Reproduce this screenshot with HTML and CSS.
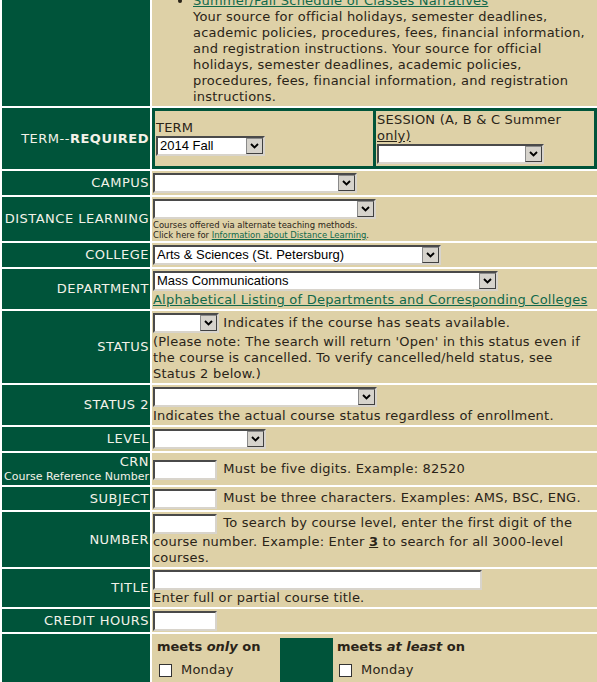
FILE: index.html
```html
<!DOCTYPE html>
<html lang="en">
<head>
<meta charset="utf-8">
<title>Class Search</title>
<link rel="stylesheet" href="styles.css">
</head>
<body>
<table class="search">
  <tr>
    <td class="lbl"></td>
    <td class="fld">
      <ul class="narr">
        <li><a href="#">Summer/Fall Schedule of Classes Narratives</a><br>
        Your source for official holidays, semester deadlines, academic policies, procedures, fees, financial information, and registration instructions. Your source for official holidays, semester deadlines, academic policies, procedures, fees, financial information, and registration instructions.</li>
      </ul>
    </td>
  </tr>
  <tr>
    <td class="lbl">TERM--<b>REQUIRED</b></td>
    <td class="fld nopad">
      <table class="term">
        <tr>
          <td>TERM<br>
            <span class="sel blk w-term"><select aria-label="Term"><option>2014 Fall</option></select><span class="sel-btn"><svg viewBox="0 0 9 6" width="9" height="6"><path d="M1 1l3.5 3.5L8 1" fill="none" stroke="#000" stroke-width="1.9"/></svg></span></span>
          </td>
          <td>SESSION (A, B &amp; C Summer <u>only)</u><br>
            <span class="sel blk w-session"><select aria-label="Session"><option></option></select><span class="sel-btn"><svg viewBox="0 0 9 6" width="9" height="6"><path d="M1 1l3.5 3.5L8 1" fill="none" stroke="#000" stroke-width="1.9"/></svg></span></span>
          </td>
        </tr>
      </table>
    </td>
  </tr>
  <tr>
    <td class="lbl">CAMPUS</td>
    <td class="fld"><span class="sel w-campus"><select aria-label="Campus"><option></option></select><span class="sel-btn"><svg viewBox="0 0 9 6" width="9" height="6"><path d="M1 1l3.5 3.5L8 1" fill="none" stroke="#000" stroke-width="1.9"/></svg></span></span></td>
  </tr>
  <tr>
    <td class="lbl">DISTANCE LEARNING</td>
    <td class="fld"><span class="sel w-dist"><select aria-label="Distance learning"><option></option></select><span class="sel-btn"><svg viewBox="0 0 9 6" width="9" height="6"><path d="M1 1l3.5 3.5L8 1" fill="none" stroke="#000" stroke-width="1.9"/></svg></span></span>
      <div class="tiny">Courses offered via alternate teaching methods.<br>Click here for <a href="#">Information about Distance Learning</a>.</div>
    </td>
  </tr>
  <tr>
    <td class="lbl">COLLEGE</td>
    <td class="fld"><span class="sel w-college"><select aria-label="College"><option>Arts &amp; Sciences (St. Petersburg)</option></select><span class="sel-btn"><svg viewBox="0 0 9 6" width="9" height="6"><path d="M1 1l3.5 3.5L8 1" fill="none" stroke="#000" stroke-width="1.9"/></svg></span></span></td>
  </tr>
  <tr>
    <td class="lbl">DEPARTMENT</td>
    <td class="fld"><span class="sel w-dept"><select aria-label="Department"><option>Mass Communications</option></select><span class="sel-btn"><svg viewBox="0 0 9 6" width="9" height="6"><path d="M1 1l3.5 3.5L8 1" fill="none" stroke="#000" stroke-width="1.9"/></svg></span></span><br>
      <a href="#">Alphabetical Listing of Departments and Corresponding Colleges</a>
    </td>
  </tr>
  <tr>
    <td class="lbl">STATUS</td>
    <td class="fld"><span class="sel w-status"><select aria-label="Status"><option></option></select><span class="sel-btn"><svg viewBox="0 0 9 6" width="9" height="6"><path d="M1 1l3.5 3.5L8 1" fill="none" stroke="#000" stroke-width="1.9"/></svg></span></span> Indicates if the course has seats available.
      <div>(Please note: The search will return 'Open' in this status even if the course is cancelled. To verify cancelled/held status, see Status 2 below.)</div>
    </td>
  </tr>
  <tr>
    <td class="lbl">STATUS 2</td>
    <td class="fld"><span class="sel w-status2"><select aria-label="Status 2"><option></option></select><span class="sel-btn"><svg viewBox="0 0 9 6" width="9" height="6"><path d="M1 1l3.5 3.5L8 1" fill="none" stroke="#000" stroke-width="1.9"/></svg></span></span><br>
      Indicates the actual course status regardless of enrollment.
    </td>
  </tr>
  <tr>
    <td class="lbl">LEVEL</td>
    <td class="fld"><span class="sel w-level"><select aria-label="Level"><option></option></select><span class="sel-btn"><svg viewBox="0 0 9 6" width="9" height="6"><path d="M1 1l3.5 3.5L8 1" fill="none" stroke="#000" stroke-width="1.9"/></svg></span></span></td>
  </tr>
  <tr>
    <td class="lbl">CRN<span class="lbl-sub">Course Reference Number</span></td>
    <td class="fld"><input class="txt w-short" type="text" aria-label="CRN"> Must be five digits. Example: 82520</td>
  </tr>
  <tr>
    <td class="lbl">SUBJECT</td>
    <td class="fld"><input class="txt w-short" type="text" aria-label="Subject"> Must be three characters. Examples: AMS, BSC, ENG.</td>
  </tr>
  <tr>
    <td class="lbl">NUMBER</td>
    <td class="fld"><input class="txt w-short" type="text" aria-label="Number"> To search by course level, enter the first digit of the course number. Example: Enter <b><u>3</u></b> to search for all 3000-level courses.</td>
  </tr>
  <tr>
    <td class="lbl">TITLE</td>
    <td class="fld"><input class="txt w-title" type="text" aria-label="Title"><br>Enter full or partial course title.</td>
  </tr>
  <tr>
    <td class="lbl">CREDIT HOURS</td>
    <td class="fld"><input class="txt w-short" type="text" aria-label="Credit hours"></td>
  </tr>
  <tr>
    <td class="lbl"></td>
    <td class="fld">
      <table class="days">
        <tr>
          <td class="dcol">
            <div class="dhead">meets <i>only</i> on</div>
            <label class="day"><input type="checkbox"> Monday</label>
            <label class="day"><input type="checkbox"> Tuesday</label>
            <label class="day"><input type="checkbox"> Wednesday</label>
            <label class="day"><input type="checkbox"> Thursday</label>
            <label class="day"><input type="checkbox"> Friday</label>
          </td>
          <td class="dgap"></td>
          <td class="dcol">
            <div class="dhead">meets <i>at least</i> on</div>
            <label class="day"><input type="checkbox"> Monday</label>
            <label class="day"><input type="checkbox"> Tuesday</label>
            <label class="day"><input type="checkbox"> Wednesday</label>
            <label class="day"><input type="checkbox"> Thursday</label>
            <label class="day"><input type="checkbox"> Friday</label>
          </td>
        </tr>
      </table>
    </td>
  </tr>
</table>
</body>
</html>
```

FILE: styles.css
```css
html {
  overflow: hidden;
  background: #fff;
}

body {
  margin: -10px 0 0 0;
  font: 13px/16px "DejaVu Sans", Verdana, sans-serif;
  letter-spacing: 0.22px;
  color: #2a2418;
}

a {
  color: #11694b;
}

.search {
  border-collapse: separate;
  border-spacing: 2px;
  width: calc(100% + 2px);
}

.lbl {
  width: 146px;
  padding: 1px;
  background: #00543a;
  color: #f3f2e8;
  text-align: right;
  vertical-align: middle;
  white-space: nowrap;
  letter-spacing: 0.5px;
}

.lbl-sub {
  display: block;
  font-size: 11px;
  line-height: 14px;
  letter-spacing: 0;
}

.fld {
  padding: 1px;
  background: #ded1a7;
  vertical-align: middle;
}

.fld.nopad {
  padding: 0;
}

.narr {
  margin: 0;
  padding-left: 40px;
}

/* term / session sub table */
.term {
  width: 100%;
  border-collapse: separate;
  border-spacing: 3px;
  background: #00543a;
}

.term td {
  width: 50%;
  padding: 1px 6px 2px 1px;
  background: #ded1a7;
  vertical-align: middle;
}

/* classic drop-downs */
.sel {
  display: inline-flex;
  box-sizing: border-box;
  height: 20px;
  margin: 1px 0;
  border: 2px solid;
  border-color: #4a4a4a #d8d4cc #d8d4cc #4a4a4a;
  background: #fff;
  vertical-align: middle;
  letter-spacing: 0;
}

.sel.blk {
  display: flex;
  margin: 0;
}

.sel select {
  -webkit-appearance: none;
  appearance: none;
  flex: 1;
  min-width: 0;
  height: 16px;
  margin: 0;
  border: 0;
  padding: 0 0 0 2px;
  background: #fff;
  color: #000;
  font: 13px/16px "Liberation Sans", Arial, sans-serif;
  outline: none;
}

.sel-btn {
  flex: none;
  display: flex;
  align-items: center;
  justify-content: center;
  box-sizing: border-box;
  width: 17px;
  height: 16px;
  background: #d6d3cc;
  border: 1px solid;
  border-color: #8a8a8a #404040 #404040 #8a8a8a;
}

.w-term { width: 109px; }
.w-session { width: 167px; }
.w-campus { width: 204px; }
.w-dist { width: 223px; }
.w-college { width: 288px; }
.w-dept { width: 345px; }
.w-status { width: 66px; }
.w-status2 { width: 224px; }
.w-level { width: 113px; }

/* classic text boxes */
.txt {
  box-sizing: border-box;
  height: 20px;
  margin: 1px 2px 0 0;
  padding: 0 2px;
  border: 2px solid;
  border-color: #4a4a4a #d8d4cc #d8d4cc #4a4a4a;
  background: #fff;
  font: 13px "Liberation Sans", Arial, sans-serif;
  vertical-align: middle;
}

.w-short { width: 64px; }
.w-title { width: 329px; margin: 0; }

.tiny {
  font: 9.4px/10px "DejaVu Sans Condensed", "Liberation Sans", sans-serif;
  letter-spacing: 0;
}

/* days */
.days {
  border-collapse: separate;
  border-spacing: 3px;
}

.dcol {
  width: 119px;
  padding: 1px;
  vertical-align: top;
}

.dgap {
  width: 53px;
  padding: 0;
  background: #00543a;
}

.dhead {
  font-weight: bold;
  margin-bottom: 4px;
  white-space: nowrap;
  letter-spacing: 0;
}

.day {
  display: flex;
  align-items: center;
  height: 22px;
}

.day input {
  -webkit-appearance: none;
  appearance: none;
  box-sizing: border-box;
  width: 13px;
  height: 13px;
  margin: 0 9px 0 2px;
  border: 1px solid #333;
  background: #fff;
}
```
